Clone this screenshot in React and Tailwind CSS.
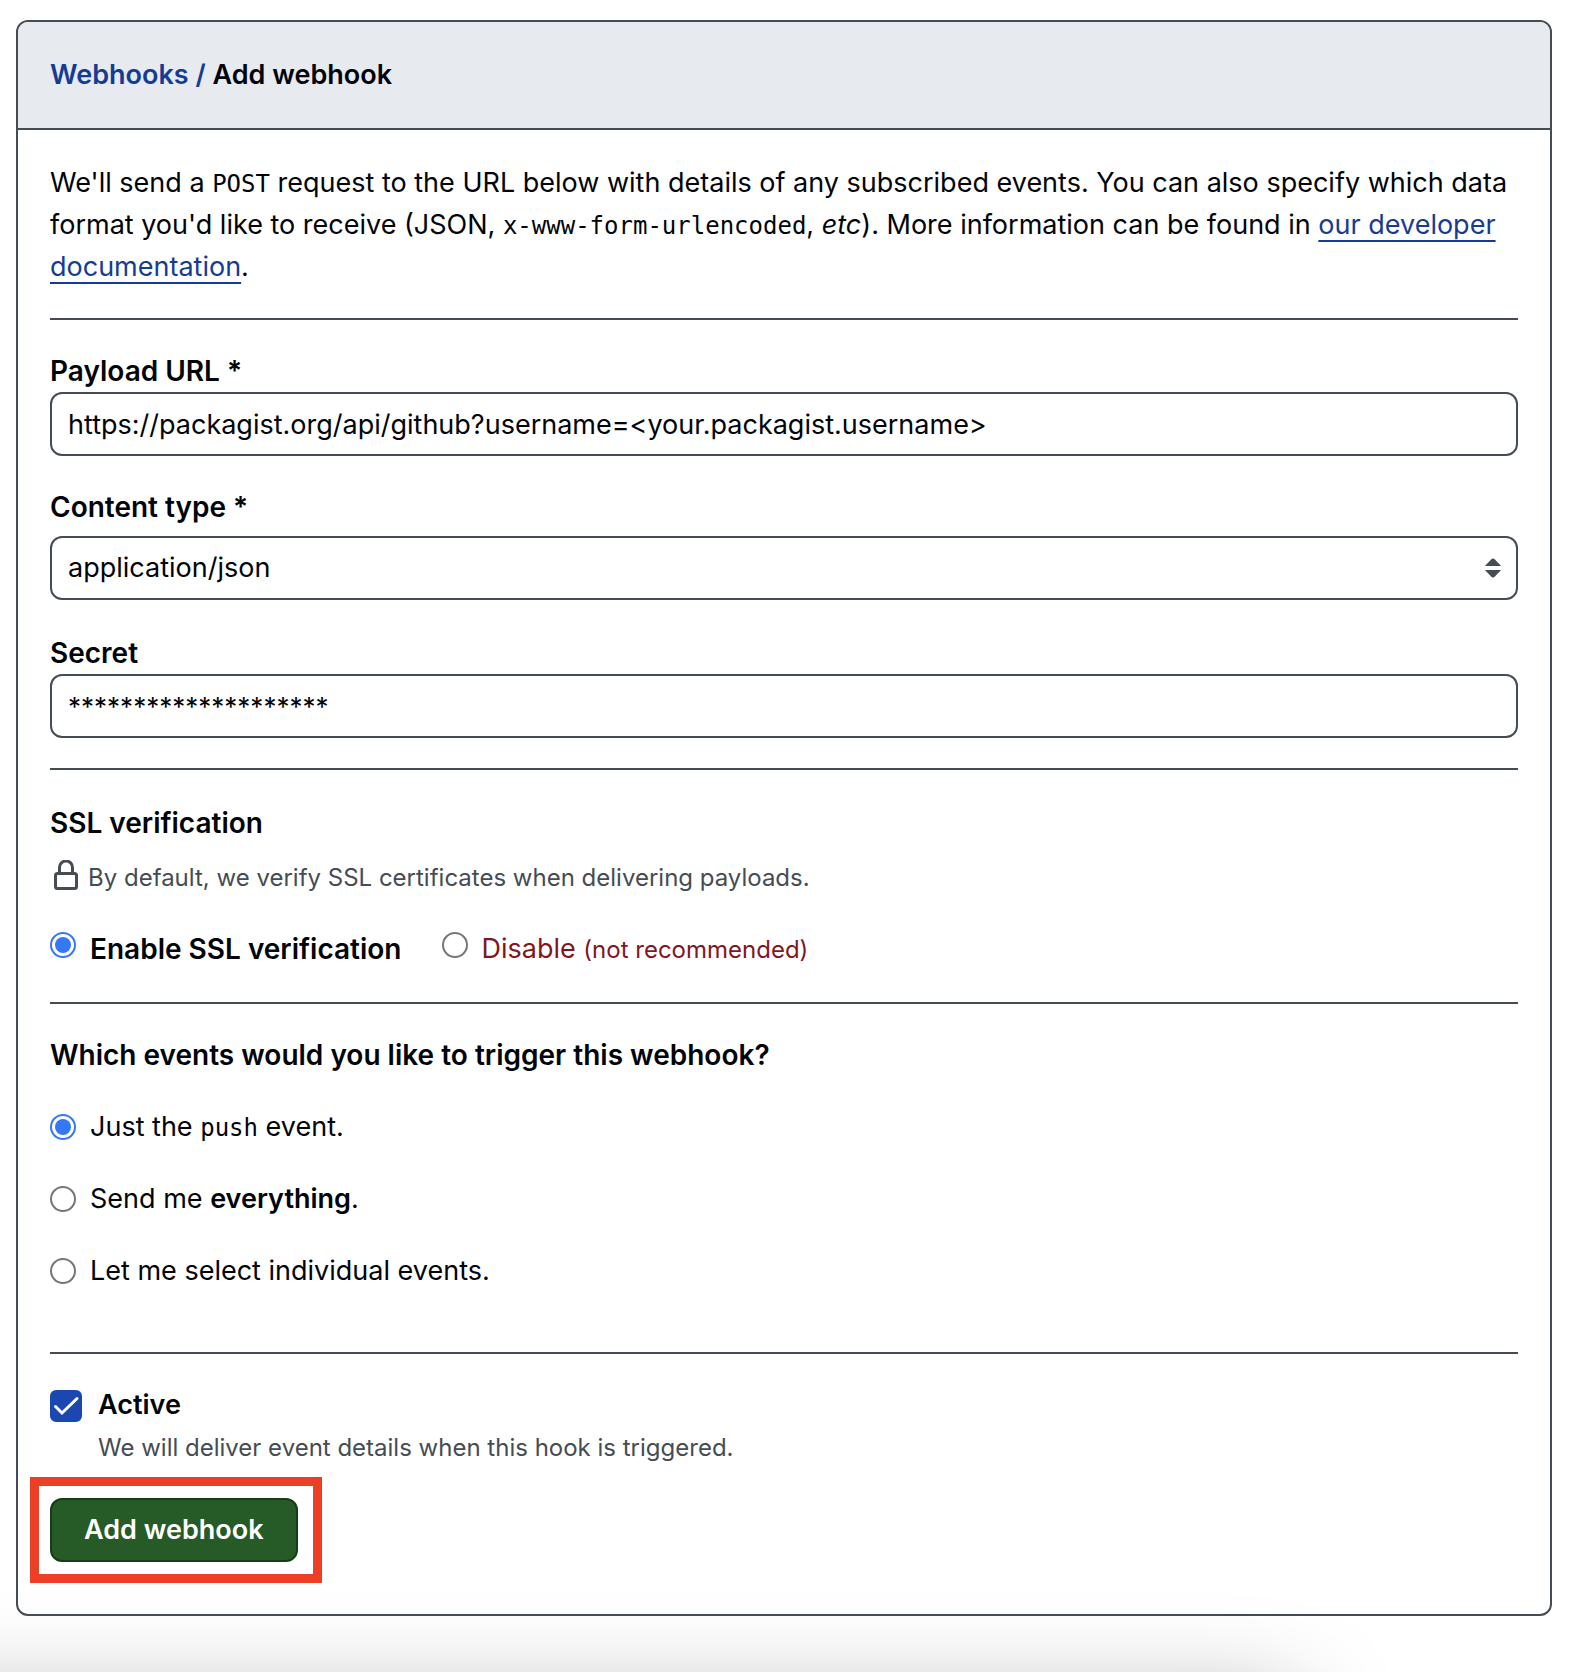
import { useState } from "react";

function Code({ children }) {
  return (
    <code className="font-['DejaVu_Sans_Mono',monospace] text-[24px] leading-none">
      {children}
    </code>
  );
}

function Divider({ className = "" }) {
  return <hr className={`border-0 border-t-2 border-[#454c54] ${className}`} />;
}

function Radio({ className = "", ...props }) {
  return (
    <input
      type="radio"
      className={`size-[26px] shrink-0 appearance-none rounded-full border-2 border-[#767676] bg-white bg-clip-content p-[3px] checked:border-[#3478f6] checked:bg-[#3478f6] ${className}`}
      {...props}
    />
  );
}

const fieldClass =
  "block h-16 w-full appearance-none rounded-xl border-2 border-[#454c54] bg-white px-4";

export default function App() {
  const [ssl, setSsl] = useState("enable");
  const [events, setEvents] = useState("push");
  const [active, setActive] = useState(true);
  const [url, setUrl] = useState(
    "https://packagist.org/api/github?username=<your.packagist.username>"
  );
  const [secret, setSecret] = useState("********************");

  return (
    <div className="relative min-h-screen overflow-hidden bg-white pt-5 pr-5 pb-14 pl-4 font-[Inter,sans-serif] text-[27px] leading-[42px] text-[#010409]">
      <main className="overflow-hidden rounded-xl border-2 border-[#454c54]">
        <header className="border-b-2 border-[#454c54] bg-[#e7eaef] px-8 py-8">
          <h1 className="font-semibold">
            <a href="#webhooks" className="text-[#163b94]">
              Webhooks /
            </a>{" "}
            Add webhook
          </h1>
        </header>

        <form className="px-8 pt-8 pb-[52px]" onSubmit={(e) => e.preventDefault()}>
          <p>
            We'll send a <Code>POST</Code> request to the URL below with details of any
            subscribed events. You can also specify which data format you'd like to receive
            (JSON, <Code>x-www-form-urlencoded</Code>, <em>etc</em>). More information can be
            found in{" "}
            <a
              href="#docs"
              className="text-[#163b94] underline decoration-2 underline-offset-[6px] [text-decoration-skip-ink:none]"
            >
              our developer documentation
            </a>
            .
          </p>

          <Divider className="my-[30px]" />

          <label htmlFor="url" className="block text-[28px] font-semibold">
            Payload URL *
          </label>
          <input
            id="url"
            type="text"
            value={url}
            onChange={(e) => setUrl(e.target.value)}
            className={`${fieldClass} text-[27px]`}
          />

          <label
            htmlFor="content-type"
            className="mt-[30px] mb-2 block text-[28px] font-semibold"
          >
            Content type *
          </label>
          <div className="relative">
            <select id="content-type" className={`${fieldClass} text-[27px]`}>
              <option>application/json</option>
              <option>application/x-www-form-urlencoded</option>
            </select>
            <svg
              aria-hidden="true"
              viewBox="0 0 18 20"
              className="pointer-events-none absolute top-[22px] right-4 h-5 w-[18px] fill-[#454c54]"
            >
              <path d="M.9 8 7.6 1.1Q9-.2 10.400 1.100L17.100 8Z" />
              <path d="M.9 12 7.600 18.900Q9 20.200 10.400 18.900L17.100 12Z" />
            </svg>
          </div>

          <label htmlFor="secret" className="mt-8 block text-[28px] font-semibold">
            Secret
          </label>
          <input
            id="secret"
            type="text"
            value={secret}
            onChange={(e) => setSecret(e.target.value)}
            className={`${fieldClass} text-[26px]`}
          />

          <Divider className="mt-[30px] mb-8" />

          <h2 className="text-[28px] font-semibold">SSL verification</h2>
          <p className="mt-4 flex items-center text-[24px] leading-9 text-[#454c54]">
            <svg
              aria-hidden="true"
              viewBox="0 0 32 32"
              className="mr-[6px] -mt-1 size-8 fill-none stroke-[#454c54] stroke-3"
            >
              <rect x="5.500" y="13.500" width="21" height="15" rx="2" />
              <path d="M9.500 13.500V7.500a6.500 6.500 0 0 1 13 0v6" />
            </svg>
            By default, we verify SSL certificates when delivering payloads.
          </p>
          <div className="mt-8 flex gap-10">
            <label className="flex items-start gap-[14px] text-[28px] font-semibold">
              <Radio
                name="ssl"
                className="mt-1"
                checked={ssl === "enable"}
                onChange={() => setSsl("enable")}
              />
              Enable SSL verification
            </label>
            <label className="flex items-start gap-[14px] text-[#82161f]">
              <Radio
                name="ssl"
                className="mt-1"
                checked={ssl === "disable"}
                onChange={() => setSsl("disable")}
              />
              <span>
                Disable{" "}
                <span className="text-[24px] leading-none">(not recommended)</span>
              </span>
            </label>
          </div>

          <Divider className="mt-8 mb-[30px]" />

          <fieldset>
            <legend className="text-[28px] font-semibold">
              Which events would you like to trigger this webhook?
            </legend>
            <div className="mt-[30px] flex flex-col items-start gap-[30px]">
              <label className="flex items-center gap-[14px]">
                <Radio
                  name="events"
                  checked={events === "push"}
                  onChange={() => setEvents("push")}
                />
                <span>
                  Just the <Code>push</Code> event.
                </span>
              </label>
              <label className="flex items-center gap-[14px]">
                <Radio
                  name="events"
                  checked={events === "all"}
                  onChange={() => setEvents("all")}
                />
                <span>
                  Send me <strong className="font-semibold">everything</strong>.
                </span>
              </label>
              <label className="flex items-center gap-[14px]">
                <Radio
                  name="events"
                  checked={events === "some"}
                  onChange={() => setEvents("some")}
                />
                Let me select individual events.
              </label>
            </div>
          </fieldset>

          <Divider className="mt-[60px] mb-[30px]" />

          <div className="flex items-start gap-4">
            <span className="relative mt-1.5 size-8 shrink-0">
              <input
                id="active"
                type="checkbox"
                checked={active}
                onChange={(e) => setActive(e.target.checked)}
                aria-describedby="active-note"
                className="peer block size-8 appearance-none rounded-md border-2 border-[#454c54] checked:border-[#1b48b0] checked:bg-[#1b48b0]"
              />
              <svg
                aria-hidden="true"
                viewBox="0 0 32 32"
                className="pointer-events-none invisible absolute inset-0 size-8 fill-none stroke-white stroke-3 peer-checked:visible"
              >
                <path d="M5.500 16.500 12 23 27 8.500" strokeLinecap="round" />
              </svg>
            </span>
            <div>
              <label htmlFor="active" className="block font-semibold">
                Active
              </label>
              <p id="active-note" className="mt-1 text-[24px] leading-9 text-[#454c54]">
                We will deliver event details when this hook is triggered.
              </p>
            </div>
          </div>

          <div className="relative mt-8 w-fit">
            <button
              type="submit"
              className="block h-16 rounded-xl border-2 border-[#163c18] bg-[#265b27] px-8 font-semibold text-white"
            >
              Add webhook
            </button>
            <div
              aria-hidden="true"
              className="pointer-events-none absolute -top-[21px] -right-6 -bottom-[21px] -left-5 border-9 border-[#eb4025]"
            />
          </div>
        </form>
      </main>

      <div
        aria-hidden="true"
        className="pointer-events-none absolute -bottom-16 -left-16 h-8 w-[1300px] shadow-[0_60px_100px_60px_rgba(0,0,0,0.35)]"
      />
    </div>
  );
}
